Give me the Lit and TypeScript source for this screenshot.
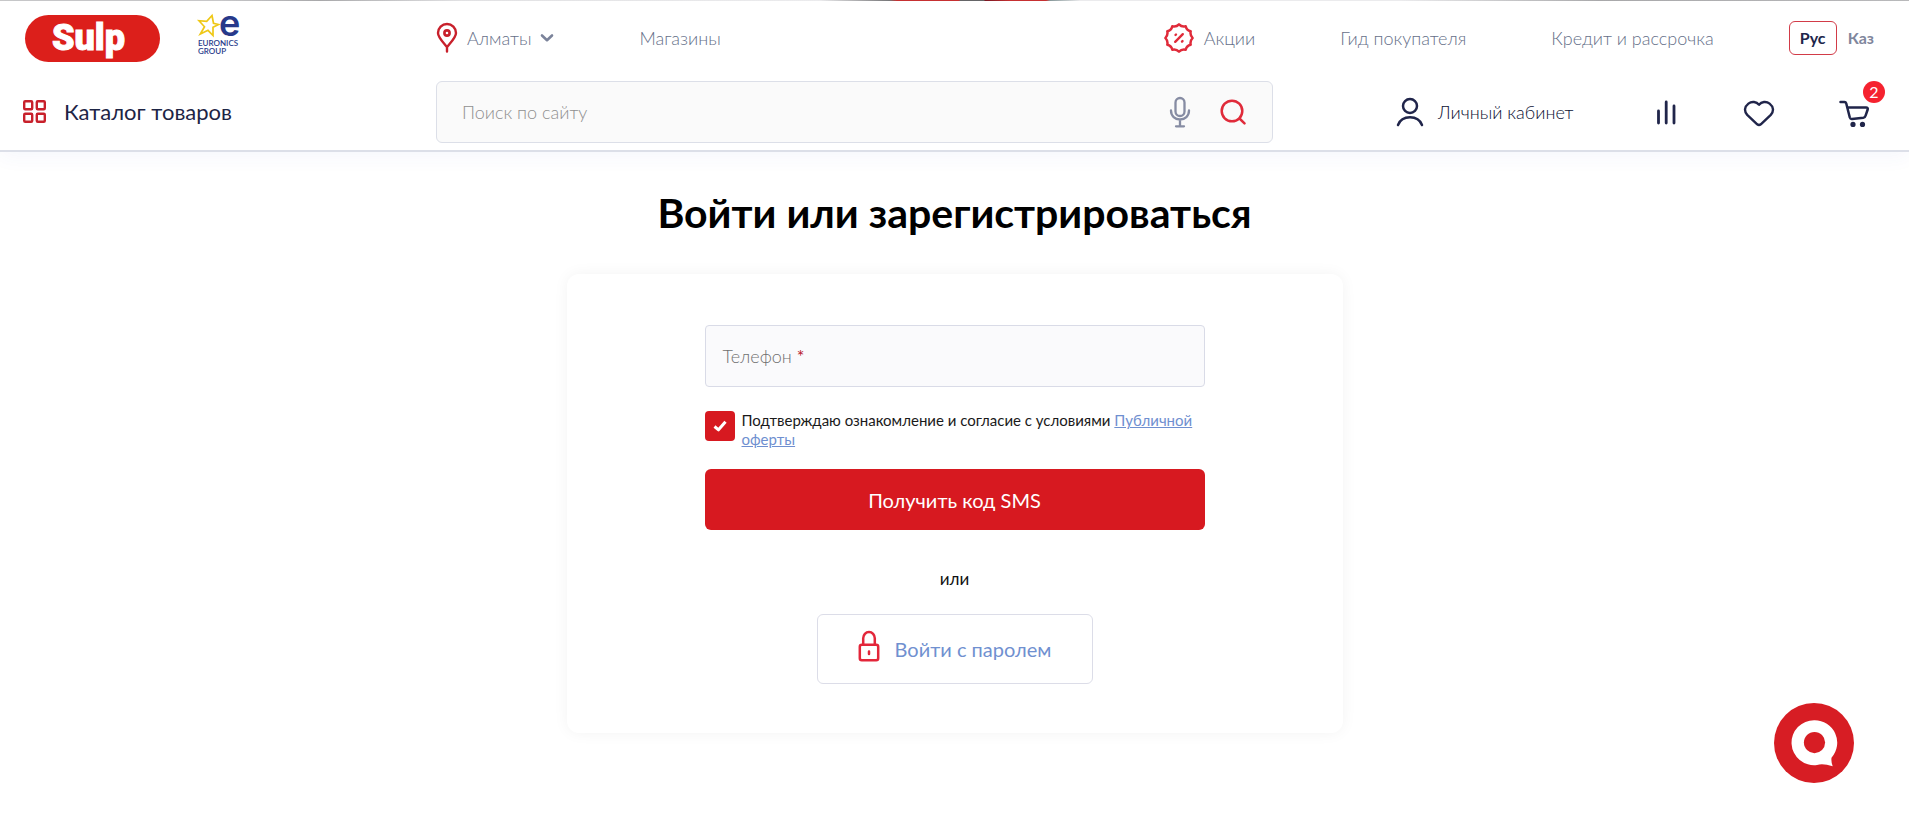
import { LitElement, html, css, svg } from "lit";
import { customElement, state } from "lit/decorators.js";

const pinIcon = svg`<svg width="22" height="32" viewBox="0 0 22 32" fill="none" stroke="#c8202b" aria-hidden="true"><path d="M11 29.500V25C7 20 2 15.500 2 11a9 9 0 0 1 18 0C20 15.500 15 20 11 25" stroke-width="2.400" stroke-linecap="round" stroke-linejoin="round"/><circle cx="11" cy="11" r="2.600" stroke-width="2.600"/></svg>`;
const chevronIcon = svg`<svg width="14" height="10" viewBox="0 0 14 10" fill="none" stroke="#7b839a" stroke-width="2.600" stroke-linecap="round" stroke-linejoin="round" aria-hidden="true"><path d="M2 2.500 7 7.200 12 2.500"/></svg>`;
const saleIcon = svg`<svg width="30" height="30" viewBox="0 0 30 30" fill="none" stroke="#e02b3a" stroke-width="2.500" stroke-linecap="round" stroke-linejoin="round" aria-hidden="true"><path d="M15 1.400Q17.800 4.300 21.700 3.300Q22.600 7.400 26.700 8.300Q25.800 12 28.600 15Q25.800 18 26.700 21.700Q22.600 22.600 21.700 26.700Q17.800 25.700 15 28.600Q12.200 25.700 8.300 26.700Q7.400 22.600 3.300 21.700Q4.200 18 1.400 15Q4.200 12 3.300 8.300Q7.400 7.400 8.300 3.300Q12.200 4.300 15 1.400Z"/><path d="M11.200 18.800l7.600-7.600M11.500 12l.5-.5M18 18.600l.5-.5" stroke-width="2.400"/></svg>`;
const catalogIcon = svg`<svg width="24" height="24" viewBox="0 0 24 24" fill="none" stroke="#c8202b" stroke-width="2.400" aria-hidden="true"><rect x="1.200" y="1.200" width="8" height="8" rx="1"/><rect x="13.800" y="1.200" width="8" height="8" rx="1"/><rect x="1.200" y="13.800" width="8" height="8" rx="1"/><rect x="13.800" y="13.800" width="8" height="8" rx="1"/></svg>`;
const micIcon = svg`<svg width="22" height="32" viewBox="0 0 22 32" fill="none" stroke="#868ca3" stroke-width="2.300" stroke-linecap="round" aria-hidden="true"><rect x="6.500" y="2" width="9" height="18" rx="4.500"/><path d="M2 14.500c0 5.500 4 9 9 9s9-3.500 9-9M11 23.500V30M7 30.300h8"/></svg>`;
const searchIcon = svg`<svg width="26" height="26" viewBox="0 0 26 26" fill="none" stroke="#e02b3a" stroke-width="2.500" stroke-linecap="round" aria-hidden="true"><circle cx="12" cy="12" r="10.300"/><path d="m19.500 19.500 5 4.800"/></svg>`;
const userIcon = svg`<svg width="28" height="30" viewBox="0 0 28 30" fill="none" stroke="#20254a" stroke-width="2.500" stroke-linecap="round" aria-hidden="true"><circle cx="14" cy="9" r="7"/><path d="M2 28c2-5.200 6.600-7.700 12-7.700S24 22.800 26 28"/></svg>`;
const barsIcon = svg`<svg width="28" height="26" viewBox="0 0 28 26" fill="none" stroke="#20254a" stroke-width="2.800" stroke-linecap="round" aria-hidden="true"><path d="M6.500 12v12M14.200 3v21M22 7v17"/></svg>`;
const heartIcon = svg`<svg width="32" height="30" viewBox="0 0 32 30" fill="none" stroke="#20254a" stroke-width="2.400" stroke-linejoin="round" aria-hidden="true"><path transform="translate(0 2)" d="M16 5.700C13.500 2.700 8.800 2 5.400 4.600 1.300 7.800 1 12.500 4.200 15.900L14.200 25.300Q16 26.700 17.800 25.300L27.800 15.900C31 12.500 30.700 7.800 26.600 4.600 23.200 2 18.500 2.700 16 5.700Z"/></svg>`;
const cartIcon = svg`<svg width="32" height="30" viewBox="0 0 32 30" fill="none" stroke="#20254a" stroke-width="2.500" stroke-linecap="round" stroke-linejoin="round" aria-hidden="true"><path d="M2.500 5h4Q7.800 5 8.200 6.300L11.800 20.500q.5 1.700 2.200 1.500l11.300-1.300q1.800-.3 2.200-1.900l2.200-6.300q.5-2-1.600-2H10"/><g fill="#20254a" stroke="none"><circle cx="15" cy="27.400" r="2.600"/><circle cx="24.500" cy="27.400" r="2.600"/></g></svg>`;
const lockIcon = svg`<svg width="22" height="38" viewBox="0 0 22 38" fill="none" stroke="#e3263a" stroke-width="2.500" stroke-linecap="round" stroke-linejoin="round" aria-hidden="true"><rect x="1.800" y="14.800" width="18.400" height="15.500" rx="2"/><path d="M5.200 14V8.300a5.800 6.300 0 0 1 11.600 0V14M11 21.500v2.500"/></svg>`;
const checkIcon = svg`<svg class="tick" width="14" height="12" viewBox="0 0 14 12" fill="none" stroke="#fff" stroke-width="3" stroke-linejoin="round" aria-hidden="true"><path d="m1.500 6.500 4 3.300 7-8"/></svg>`;
const euronicsLogo = svg`<svg class="euro" width="44" height="52" viewBox="0 0 44 52" aria-hidden="true"><path d="M14 3.500l1.500 7.700 5 1.300-5.500 2.700v8.300l-5-5.200L2.300 22l4.200-7.200L1 8.700l7.700.6z" fill="none" stroke="#efc816" stroke-width="1.700"/><text class="euro-e" x="21" y="24">e</text><text class="euro-text" x="0" y="34">EURONICS</text><text class="euro-text" x="0" y="42">GROUP</text></svg>`;
const chatIcon = svg`<svg width="48" height="48" viewBox="0 0 48 48" aria-hidden="true"><path d="M24.500 1.200A22.500 22.500 0 1 0 27 46Q33 44.300 42.700 47.200 41 43 41.500 38.700A22.500 22.500 0 0 0 24.500 1.200Z" fill="#fff"/><circle cx="24.500" cy="23.600" r="10.600" fill="#d71d24"/></svg>`;

@customElement("site-header")
export class SiteHeader extends LitElement {
  static styles = css`
    :host { display: block; }
    * { box-sizing: border-box; }
    a { color: inherit; text-decoration: none; }
    button { border: 0; padding: 0; background: none; color: inherit; font: inherit; cursor: pointer; }
    svg { display: block; flex: none; }
    .promo {
      height: 1px;
      background: linear-gradient(90deg, #c9c9c9 0 220px, #aaa 320px, #e4e4e4 460px, #eee 820px, #777 890px, #c9302f 897px 959px, #666 960px 984px, #7a1720 985px, #c9302f 1010px 1046px, #899 1050px, #eee 1080px 1400px, #aaa 1600px, #bbb 100%);
    }
    .header {
      display: grid;
      grid-template-columns: 413px 1fr 601px;
      padding: 0 35px 0 23px;
      height: 151px;
      grid-template-rows: 74px 74px;
      align-items: center;
      border-bottom: 2px solid #dcdfe8;
      box-shadow: 0 4px 20px rgba(60, 80, 190, 0.05);
    }
    .logos { display: flex; align-items: center; gap: 38px; padding-left: 2px; }
    .sulp {
      display: flex; align-items: center; justify-content: center;
      width: 135px; height: 47px; border-radius: 24px; padding-right: 8px;
      background: #dc1f1b; color: #fff; -webkit-text-stroke: 1px #fff;
      font: 900 36px/47px Roboto, sans-serif;
    }
    .euro { overflow: visible; }
    .euro-e { font: 600 36px Inter, sans-serif; fill: #27398a; }
    .euro-text { font: 600 8px Lato, sans-serif; fill: #27398a; }
    .nav { grid-column: 2 / 4; display: flex; align-items: center; color: #667089; font-size: 18px; line-height: 24px; font-weight: 300; }
    .city { display: flex; align-items: center; gap: 9px; }
    .sale { display: flex; align-items: center; gap: 10px; }
    .links { display: flex; align-items: center; gap: 85px; }
    .right { margin-left: auto; }
    .langs { display: flex; align-items: center; gap: 11px; margin-left: 75px; color: #7f869c; font-size: 16px; font-weight: 700; }
    .lang-on { height: 34px; width: 48px; border: 1px solid #d23b48; border-radius: 6px; color: #20254a; }
    .catalog { display: flex; align-items: center; gap: 17px; color: #1d2445; font-size: 22px; line-height: 28px; }
    .search {
      display: flex; align-items: center; height: 62px; padding: 0 26px 0 23px; gap: 29px;
      border: 1px solid #dcdfe8; border-radius: 6px; background: #fafafa;
    }
    .query { flex: 1; min-width: 0; border: 0; outline: 0; background: none; font: inherit; font-size: 18px; font-weight: 300; }
    .query::placeholder { color: #909090; opacity: 1; }
    .tools { display: flex; align-items: center; justify-content: space-between; padding: 0 4px 0 123px; color: #20254a; }
    .icons { display: flex; align-items: center; gap: 63px; }
    .account { display: flex; align-items: center; gap: 14px; color: #0c1233; font-size: 18px; line-height: 24px; font-weight: 300; }
    .cart { position: relative; }
    .badge {
      position: absolute; right: -15px; top: -16px; width: 22px; height: 22px; border-radius: 50%;
      background: #f5222f; color: #fff; font-size: 16px; line-height: 22px; text-align: center;
    }
  `;

  render() {
    return html`
      <div class="promo"></div>
      <header class="header">
        <div class="logos">
          <a class="sulp" href="#">Sulp</a>
          <a href="#" aria-label="Euronics Group">${euronicsLogo}</a>
        </div>
        <nav class="nav">
          <div class="links">
            <button class="city">${pinIcon}<span>Алматы</span>${chevronIcon}</button>
            <a href="#">Магазины</a>
          </div>
          <div class="links right">
            <a class="sale" href="#">${saleIcon}<span>Акции</span></a>
            <a href="#">Гид покупателя</a>
            <a href="#">Кредит и рассрочка</a>
          </div>
          <div class="langs">
            <button class="lang-on">Рус</button>
            <button>Каз</button>
          </div>
        </nav>
        <div><button class="catalog">${catalogIcon}<span>Каталог товаров</span></button></div>
        <form class="search" role="search">
          <input class="query" type="search" placeholder="Поиск по сайту" aria-label="Поиск по сайту" />
          <button type="button" aria-label="Голосовой поиск">${micIcon}</button>
          <button type="button" aria-label="Найти">${searchIcon}</button>
        </form>
        <div class="tools">
          <a class="account" href="#">${userIcon}<span>Личный кабинет</span></a>
          <div class="icons">
            <a href="#" aria-label="Сравнение">${barsIcon}</a>
            <a href="#" aria-label="Избранное">${heartIcon}</a>
            <a class="cart" href="#" aria-label="Корзина">${cartIcon}<span class="badge">2</span></a>
          </div>
        </div>
      </header>
    `;
  }
}

@customElement("login-card")
export class LoginCard extends LitElement {
  @state() private phone = "";

  static styles = css`
    :host { display: block; width: 100%; max-width: 776px; }
    * { box-sizing: border-box; }
    svg { display: block; flex: none; }
    .card {
      display: flex; flex-direction: column; align-items: center;
      padding: 51px 24px 49px; border-radius: 12px; background: #fff;
      box-shadow: 0 0 15px rgba(0, 0, 0, 0.05);
    }
    .form { display: flex; flex-direction: column; width: 100%; max-width: 500px; }
    .field { position: relative; }
    .phone {
      display: block; width: 100%; height: 62px; padding: 0 18px;
      border: 1px solid #d9dbe7; border-radius: 4px; background: #fafafc; font: inherit; font-size: 18px;
    }
    .label { position: absolute; left: 18px; top: 19px; color: #707070; font-size: 18px; line-height: 24px; font-weight: 300; pointer-events: none; }
    .star { color: #b8202f; font-weight: 400; }
    .agree { display: flex; gap: 7px; margin-top: 24px; font-size: 15px; line-height: 19px; color: #1a1a1a; }
    .box { display: grid; place-items: center; flex: none; width: 30px; height: 30px; }
    .check, .tick { grid-area: 1 / 1; }
    .check { appearance: none; width: 30px; height: 30px; margin: 0; border-radius: 4px; background: #d71920; }
    .tick { pointer-events: none; }
    .terms { color: #6f8fd0; text-decoration: underline; }
    .submit {
      height: 61px; margin-top: 20px; border: 0; border-radius: 6px;
      background: #d71920; color: #fff; font: inherit; font-size: 20px; cursor: pointer;
    }
    .or { margin: 37px 0 23px; font-size: 17px; line-height: 24px; color: #111; }
    .password {
      display: flex; align-items: center; justify-content: center; gap: 15px;
      width: 276px; height: 70px; border: 1px solid #dcdde8; border-radius: 6px;
      background: #fff; color: #7090d0; font: inherit; font-size: 20px; cursor: pointer;
    }
  `;

  render() {
    return html`
      <section class="card">
        <form class="form">
          <div class="field">
            <input class="phone" id="phone" type="tel" .value=${this.phone}
              @input=${(e: InputEvent) => (this.phone = (e.target as HTMLInputElement).value)} />
            ${this.phone ? "" : html`<label class="label" for="phone">Телефон <span class="star">*</span></label>`}
          </div>
          <div class="agree">
            <span class="box"><input class="check" id="agree" type="checkbox" checked />${checkIcon}</span>
            <label for="agree">Подтверждаю ознакомление и согласие с условиями <a class="terms" href="#">Публичной оферты</a></label>
          </div>
          <button class="submit" type="button">Получить код SMS</button>
        </form>
        <p class="or">или</p>
        <button class="password" type="button">${lockIcon}<span>Войти с паролем</span></button>
      </section>
    `;
  }
}

@customElement("app-root")
export class AppRoot extends LitElement {
  static styles = css`
    :host { display: block; min-height: 100vh; background: #fff; font-family: Lato, "Noto Sans", sans-serif; }
    .main { display: flex; flex-direction: column; align-items: center; padding: 36px 24px 48px; }
    .title { margin: 0 0 37px; color: #000; font-size: 41px; line-height: 49px; font-weight: 700; }
    .chat {
      position: fixed; right: 55px; bottom: 44px; display: grid; place-items: center;
      width: 80px; height: 80px; padding: 0; border: 0; border-radius: 50%; background: #d71d24; cursor: pointer;
    }
  `;

  render() {
    return html`
      <site-header></site-header>
      <main class="main">
        <h1 class="title">Войти или зарегистрироваться</h1>
        <login-card></login-card>
      </main>
      <button class="chat" aria-label="Чат">${chatIcon}</button>
    `;
  }
}
